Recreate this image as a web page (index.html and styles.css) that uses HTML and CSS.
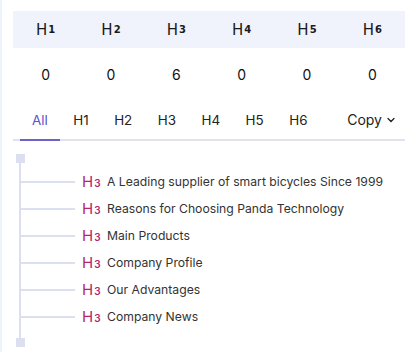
FILE: index.html
```html
<!DOCTYPE html>
<html>
    <head>
        <meta charset = utf-8>
        <title>Headings</title>
        <link rel="stylesheet" href="styles.css">
    </head>

    <body>
        <div class = panel>
            <div class = counts>
                <div class = head>H<span>1</span></div>
                <div class = head>H<span>2</span></div>
                <div class = head>H<span>3</span></div>
                <div class = head>H<span>4</span></div>
                <div class = head>H<span>5</span></div>
                <div class = head>H<span>6</span></div>
                <div class = num>0</div>
                <div class = num>0</div>
                <div class = num>6</div>
                <div class = num>0</div>
                <div class = num>0</div>
                <div class = num>0</div>
            </div>

            <div class = tabs>
                <div class = "tab active">All</div>
                <div class = tab>H1</div>
                <div class = tab>H2</div>
                <div class = tab>H3</div>
                <div class = tab>H4</div>
                <div class = tab>H5</div>
                <div class = tab>H6</div>
                <div class = copy>Copy
                    <svg width = 10 height = 10 viewBox = "0 0 10 10"><path d = "M2 3.5 L5 6.5 L8 3.5" fill = none stroke = "#222" stroke-width = 1.3 stroke-linecap = round stroke-linejoin = round/></svg>
                </div>
            </div>

            <div class = tree>
                <div class = cap></div>
                <div class = list>
                    <div class = item><b class = tag>H<span>3</span></b>A Leading supplier of smart bicycles Since 1999</div>
                    <div class = item><b class = tag>H<span>3</span></b>Reasons for Choosing Panda Technology</div>
                    <div class = item><b class = tag>H<span>3</span></b>Main Products</div>
                    <div class = item><b class = tag>H<span>3</span></b>Company Profile</div>
                    <div class = item><b class = tag>H<span>3</span></b>Our Advantages</div>
                    <div class = item><b class = tag>H<span>3</span></b>Company News</div>
                </div>
                <div class = cap></div>
            </div>
        </div>
    </body>
</html>
```

FILE: styles.css
```css
html {
    font-family: Inter, "Noto Sans", sans-serif;
    background: #fff;
}

body {
    margin: 0;
    height: 352px;
    border-left: 2px solid #eef2fa;
    color: #222;
}

.panel {
    padding: 11px 3px 0 11px;
}

.counts {
    display: grid;
    grid-template-columns: repeat(6, 1fr);
}

.head {
    height: 37px;
    background: #f0f3fc;
    display: flex;
    align-items: center;
    justify-content: center;
    font-family: "DejaVu Sans", sans-serif;
    font-size: 15px;
    color: #1a1a1a;
}

.head span {
    font-size: 10px;
    font-weight: bold;
    margin-left: 1px;
}

.num {
    height: 52px;
    display: flex;
    align-items: center;
    justify-content: center;
    font-size: 14px;
    color: #111;
}

.tabs {
    display: flex;
    align-items: center;
    height: 39px;
    padding-left: 7px;
    border-bottom: 2px solid #e1e2ee;
    gap: 1.5px;
    font-size: 13.4px;
}

.tab {
    height: 100%;
    padding: 0 12px;
    display: flex;
    align-items: center;
    box-sizing: border-box;
    color: #222;
}

.tab.active {
    color: #5b52c9;
    border-bottom: 2px solid #6b63c6;
    margin-bottom: -2px;
    height: calc(100% + 2px);
}

.copy {
    margin-left: auto;
    margin-right: 9px;
    display: flex;
    align-items: center;
    gap: 4px;
    font-size: 14px;
    color: #222;
}

.tree {
    padding-top: 13px;
    margin-left: 3px;
}

.cap {
    width: 9px;
    height: 9px;
    background: #dcdff0;
}

.list {
    margin-left: 3px;
    border-left: 2px solid #dcdff0;
    padding: 5px 0 8px;
}

.item {
    height: 27px;
    display: flex;
    align-items: center;
    font-size: 12.2px;
    color: #333;
}

.item::before {
    content: '';
    width: 54px;
    height: 2px;
    background: #dcdff0;
    margin-right: 7px;
}

.tag {
    font-weight: normal;
    font-size: 15px;
    color: #b4256e;
    width: 25px;
}

.tag span {
    font-size: 10px;
    font-weight: 600;
    margin-left: 1px;
}
```
